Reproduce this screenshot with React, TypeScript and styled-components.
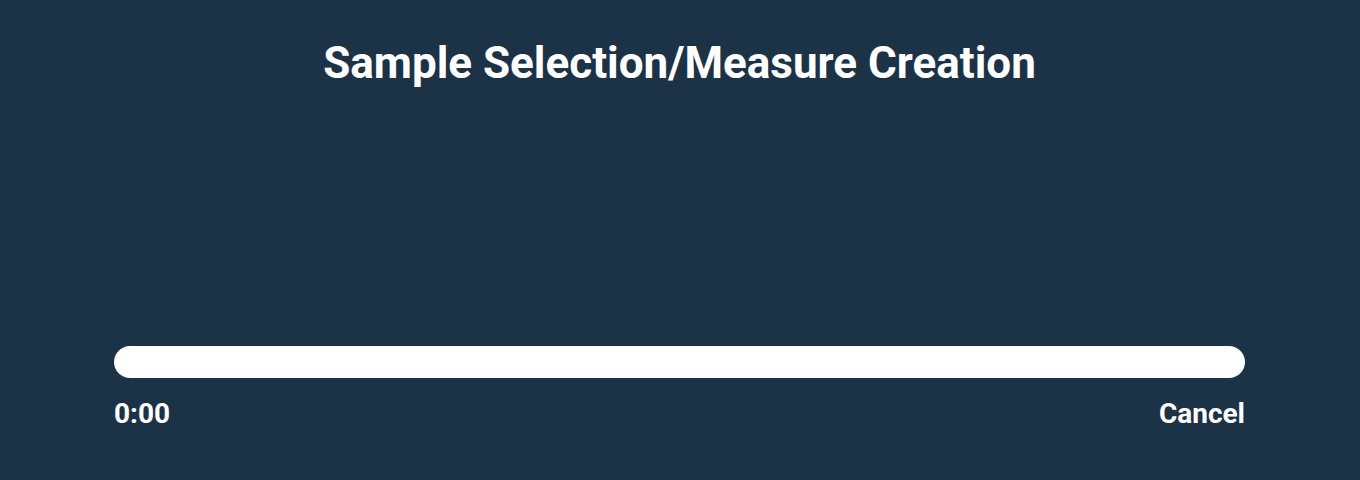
import styled, { createGlobalStyle } from "styled-components";

const GlobalStyle = createGlobalStyle`
  html, body {
    margin: 0;
    padding: 0;
    background: #1c3246;
  }
  body {
    font-family: Roboto, "Liberation Sans", sans-serif;
    color: #ffffff;
  }
`;

const Screen = styled.div`
  width: 1360px;
  height: 480px;
  box-sizing: border-box;
  display: flex;
  flex-direction: column;
  padding: 37px 115px 0 114px;
`;

const Title = styled.h1`
  margin: 0;
  text-align: center;
  font-size: 44px;
  font-weight: 700;
  line-height: 52px;
`;

const Player = styled.div`
  margin-top: auto;
  margin-bottom: 49px;
  display: flex;
  flex-direction: column;
  gap: 19px;
`;

const Track = styled.div`
  height: 32px;
  border-radius: 16px;
  background: #ffffff;
`;

const Footer = styled.div`
  display: flex;
  justify-content: space-between;
  align-items: center;
`;

const Label = styled.span`
  font-size: 28px;
  font-weight: 700;
  line-height: 34px;
`;

const CancelButton = styled.button`
  border: none;
  background: none;
  padding: 0;
  color: #ffffff;
  font-family: inherit;
  font-size: 28px;
  font-weight: 700;
  line-height: 34px;
  cursor: pointer;
`;

function App() {
  return (
    <Screen>
      <GlobalStyle />
      <Title>Sample Selection/Measure Creation</Title>
      <Player>
        <Track />
        <Footer>
          <Label>0:00</Label>
          <CancelButton>Cancel</CancelButton>
        </Footer>
      </Player>
    </Screen>
  );
}

export default App;
